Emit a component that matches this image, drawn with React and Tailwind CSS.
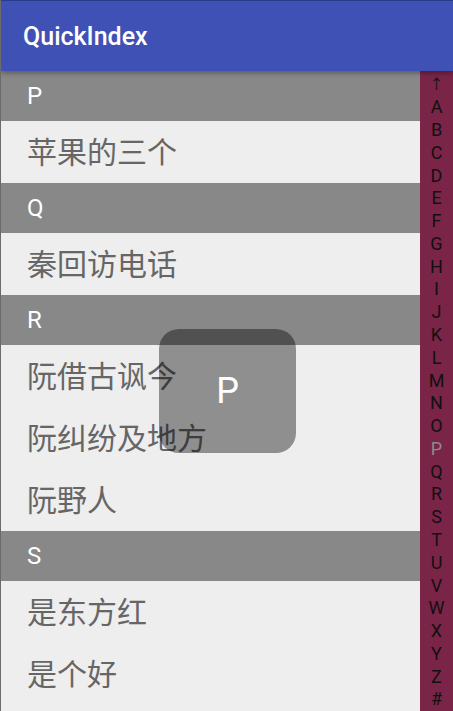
const sections = [
  { letter: "P", items: ["苹果的三个"] },
  { letter: "Q", items: ["秦回访电话"] },
  { letter: "R", items: ["阮借古讽今", "阮纠纷及地方", "阮野人"] },
  { letter: "S", items: ["是东方红", "是个好"] },
];

const indexLetters = [
  "↑", "A", "B", "C", "D", "E", "F", "G", "H", "I", "J", "K", "L", "M",
  "N", "O", "P", "Q", "R", "S", "T", "U", "V", "W", "X", "Y", "Z", "#",
];

export default function App() {
  const current = "P";

  return (
    <div className="relative h-[711px] w-[453px] overflow-hidden border-l border-[#6b6b6b] bg-[#EEEEEE] font-['Roboto','Noto_Sans_CJK_SC',sans-serif]">
      {/* TOOLBAR */}
      <div className="relative z-10 flex h-[71px] items-center border-t border-[#2c3a8c] bg-[#3F51B5] pl-[22px] pt-[2px] shadow-[0_2px_5px_rgba(0,0,0,0.35)]">
        <span className="text-[25px] font-medium text-white">QuickIndex</span>
      </div>

      <div className="flex h-[640px]">
        {/* LIST */}
        <div className="flex-1 overflow-hidden">
          {sections.map((sec) => (
            <div key={sec.letter}>
              <div className="flex h-[50px] items-center bg-[#888888] pl-[26px] text-[24px] text-white">
                {sec.letter}
              </div>
              {sec.items.map((item) => (
                <div
                  key={item}
                  className="flex h-[62px] items-center pl-[26px] text-[30px] text-[#666666]"
                >
                  {item}
                </div>
              ))}
            </div>
          ))}
        </div>

        {/* INDEX BAR */}
        <div className="flex h-full w-[33px] flex-col overflow-hidden bg-[#7A2448] pt-[2px]">
          {indexLetters.map((l) => (
            <div
              key={l}
              className={
                l === current
                  ? "flex min-h-0 flex-1 items-center justify-center text-[18px] leading-none text-[#8a8a8a]"
                  : l === "↑"
                  ? "flex min-h-0 flex-1 items-center justify-center text-[14px] leading-none text-[#111111]"
                  : "flex min-h-0 flex-1 items-center justify-center text-[18px] leading-none text-[#111111]"
              }
            >
              {l}
            </div>
          ))}
        </div>
      </div>

      {/* CURRENT LETTER TOAST */}
      <div className="absolute left-[158px] top-[329px] z-20 flex h-[124px] w-[137px] items-center justify-center rounded-[20px] bg-black/40">
        <span className="text-[36px] text-white">{current}</span>
      </div>
    </div>
  );
}
